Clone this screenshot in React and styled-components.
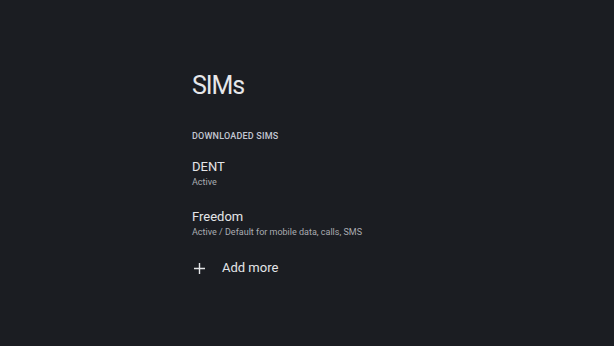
import React from "react";
import styled, { createGlobalStyle } from "styled-components";

const Global = createGlobalStyle`
  html, body { margin: 0; padding: 0; background: #1b1d22; }
  body { font-family: Roboto, "Open Sans", sans-serif; }
`;

const Page = styled.div`
  width: 614px;
  height: 346px;
  background: #1b1d22;
  box-sizing: border-box;
  padding: 71px 0 0 192px;
  display: flex;
  flex-direction: column;
`;

const Title = styled.h1`
  margin: 0;
  font-family: Roboto, sans-serif;
  font-weight: 400;
  font-size: 25px;
  letter-spacing: -1.1px;
  line-height: 30px;
  color: #e6e7ea;
`;

const SectionHeader = styled.div`
  margin-top: 29px;
  font-size: 9px;
  font-weight: 500;
  letter-spacing: 0.2px;
  color: #c3c7d2;
  line-height: 12px;
`;

const Item = styled.div`
  display: flex;
  flex-direction: column;
  margin-top: ${(p) => p.$mt}px;
`;

const ItemTitle = styled.div`
  font-size: 13px;
  line-height: 18px;
  color: #e4e5e8;
`;

const ItemSub = styled.div`
  font-size: 9px;
  line-height: 12px;
  color: #a9abb1;
`;

const AddRow = styled.div`
  display: flex;
  align-items: center;
  margin-top: 21.5px;
  gap: 16px;
`;

const AddIcon = styled.svg`
  width: 13px;
  height: 13px;
  margin-left: 1px;
`;

const AddText = styled.div`
  font-size: 13px;
  line-height: 18px;
  color: #e4e5e8;
`;

export default function App() {
  return (
    <>
      <Global />
      <Page>
        <Title>SIMs</Title>
        <SectionHeader>DOWNLOADED SIMS</SectionHeader>
        <Item $mt={15.5}>
          <ItemTitle>DENT</ItemTitle>
          <ItemSub>Active</ItemSub>
        </Item>
        <Item $mt={20}>
          <ItemTitle>Freedom</ItemTitle>
          <ItemSub>Active / Default for mobile data, calls, SMS</ItemSub>
        </Item>
        <AddRow>
          <AddIcon viewBox="0 0 13 13">
            <path d="M6.5 1v11M1 6.5h11" stroke="#e4e5e8" strokeWidth="1.4" />
          </AddIcon>
          <AddText>Add more</AddText>
        </AddRow>
      </Page>
    </>
  );
}
